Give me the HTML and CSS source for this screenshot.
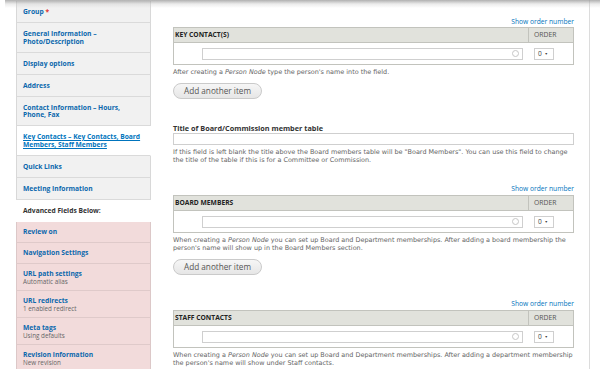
FILE: index.html
```html
<!DOCTYPE html>
<html>
<head>
<meta charset="utf-8">
<link rel="stylesheet" href="styles.css">
</head>
<body>
<div class="topshadow"></div>
<div class="layout">
  <div class="tabs">
    <div class="tab"><a>Group</a> <span class="req">*</span></div>
    <div class="tab two"><a>General Information –<br>Photo/Description</a></div>
    <div class="tab"><a>Display options</a></div>
    <div class="tab"><a>Address</a></div>
    <div class="tab two"><a>Contact Information – Hours,<br>Phone, Fax</a></div>
    <div class="tab two active"><a>Key Contacts – Key Contacts, Board<br>Members, Staff Members</a></div>
    <div class="tab"><a>Quick Links</a></div>
    <div class="tab"><a>Meeting Information</a></div>
    <div class="tab label">Advanced Fields Below:</div>
    <div class="tab pink"><a>Review on</a></div>
    <div class="tab pink"><a>Navigation Settings</a></div>
    <div class="tab pink withsub"><a>URL path settings</a><span class="sub">Automatic alias</span></div>
    <div class="tab pink withsub"><a>URL redirects</a><span class="sub">1 enabled redirect</span></div>
    <div class="tab pink withsub"><a>Meta tags</a><span class="sub">Using defaults</span></div>
    <div class="tab pink withsub last"><a>Revision information</a><span class="sub">New revision</span></div>
  </div>
  <div class="pane">
    <div class="show-order">Show order number</div>
    <div class="ftable">
      <div class="thead"><div class="th-main">KEY CONTACT(S)</div><div class="th-order">ORDER</div></div>
      <div class="trow">
        <div class="td-main"><div class="input ac"><span class="throbber"></span></div></div>
        <div class="td-order"><div class="select">0 <span class="arr">▼</span></div></div>
      </div>
    </div>
    <div class="desc"><span class="ln">After creating a <em>Person Node</em> type the person's name into the field.</span></div>
    <div class="btn">Add another item</div>

    <div class="label-title">Title of Board/Commission member table</div>
    <div class="input full"></div>
    <div class="desc"><span class="ln">If this field is left blank the title above the Board members table will be "Board Members". You can use this field to change</span><span class="ln">the title of the table if this is for a Committee or Commission.</span></div>

    <div class="show-order s2">Show order number</div>
    <div class="ftable">
      <div class="thead"><div class="th-main">BOARD MEMBERS</div><div class="th-order">ORDER</div></div>
      <div class="trow">
        <div class="td-main"><div class="input ac"><span class="throbber"></span></div></div>
        <div class="td-order"><div class="select">0 <span class="arr">▼</span></div></div>
      </div>
    </div>
    <div class="desc"><span class="ln">When creating a <em>Person Node</em> you can set up Board and Department memberships. After adding a board membership the</span><span class="ln">person's name will show up in the Board Members section.</span></div>
    <div class="btn">Add another item</div>

    <div class="show-order s3">Show order number</div>
    <div class="ftable">
      <div class="thead"><div class="th-main">STAFF CONTACTS</div><div class="th-order">ORDER</div></div>
      <div class="trow">
        <div class="td-main"><div class="input ac"><span class="throbber"></span></div></div>
        <div class="td-order"><div class="select">0 <span class="arr">▼</span></div></div>
      </div>
    </div>
    <div class="desc"><span class="ln">When creating a <em>Person Node</em> you can set up Board and Department memberships. After adding a department membership</span><span class="ln">the person's name will show under Staff contacts.</span></div>
  </div>
</div>
</body>
</html>
```
FILE: styles.css
```css
html, body {
  margin: 0;
  padding: 0;
  background: #fff;
}
body {
  width: 606px;
  height: 382px;
  overflow: hidden;
  position: relative;
  font-family: "Open Sans", "Liberation Sans", sans-serif;
  color: #333;
}
.topshadow {
  position: absolute;
  left: 5px;
  right: 6px;
  top: 0;
  height: 8px;
  background: linear-gradient(to bottom, rgba(150,150,150,0.75), rgba(200,200,200,0.35) 50%, rgba(255,255,255,0));
  z-index: 5;
}
.layout {
  display: flex;
  align-items: flex-start;
  padding-left: 16px;
}
.tabs {
  width: 135px;
  flex: none;
  margin-top: 1px;
}
.tab {
  padding: 7px 6px 6.5px 6px;
  line-height: 7.5px;
  font-size: 6.7px;
  font-weight: bold;
  background: #f1f1f1;
  border-left: 1px solid #d8d8d8;
  border-right: 1px solid #d8d8d8;
  border-bottom: 1px solid #dadada;
  white-space: nowrap;
}
.tab.two {
  padding: 7px 6px 6.5px 6px;
}
.tab a {
  color: #0b68ad;
  text-decoration: none;
}
.tab .req {
  color: #e0312f;
}
.tab.active {
  background: #fff;
  border-right-color: #fff;
}
.tab.active a {
  color: #0074bd;
  text-decoration: underline;
}
.tab.label {
  background: #fff;
  border: none;
  color: #333;
  padding: 7px 7px 7.5px 7px;
}
.tab.pink {
  background: #f2dbdb;
  border-left-color: #dcc8c8;
  border-right-color: #dcc8c8;
  border-bottom-color: #dfcaca;
  padding: 6.5px 6px 6px 6px;
}
.tab.pink.withsub {
  padding: 6px 6px 3.5px 6px;
}
.tab .sub {
  display: block;
  font-weight: normal;
  font-size: 6.3px;
  color: #666;
  line-height: 8px;
  margin-top: 1px;
}
.tab.pink.last {
  border-bottom: none;
  padding-bottom: 2px;
}
.pane {
  box-sizing: border-box;
  width: 439px;
  height: 369px;
  flex: none;
  border-right: 1px solid #dcdcdc;
  padding: 17px 15px 0 22px;
}
.show-order {
  text-align: right;
  font-size: 6.7px;
  line-height: 9px;
  color: #0074bd;
  margin-bottom: 1px;
}
.show-order.s2 { margin-top: 20px; margin-bottom: 2px; }
.show-order.s3 { margin-top: 24px; margin-bottom: 2px; }
.ftable {
  border: 1px solid #c2c3bd;
}
.thead {
  display: flex;
  height: 14px;
  background: #e1e2dc;
  border-bottom: 1px solid #c2c3bd;
}
.th-main {
  width: 354px;
  padding-left: 1px;
  font-size: 6.7px;
  font-weight: bold;
  color: #222;
  line-height: 14px;
  box-sizing: border-box;
}
.th-order {
  flex: 1;
  border-left: 1px solid #c2c3bd;
  padding-left: 5px;
  font-size: 6.8px;
  line-height: 14px;
  color: #555;
}
.trow {
  display: flex;
  height: 21px;
  align-items: center;
}
.td-main {
  width: 354px;
  padding-left: 28px;
  box-sizing: border-box;
}
.td-order {
  flex: 1;
  padding-left: 6px;
}
.input {
  height: 12px;
  box-sizing: border-box;
  border: 1px solid #cfcfcf;
  background: #fff;
}
.input.ac {
  width: 321px;
  display: flex;
  align-items: center;
  justify-content: flex-end;
  padding-right: 3px;
}
.throbber {
  width: 5px;
  height: 5px;
  border: 1px solid #c6c6c6;
  border-radius: 50%;
}
.input.full {
  width: 401px;
}
.select {
  width: 20px;
  height: 12px;
  box-sizing: border-box;
  border: 1px solid #cfcfcf;
  font-size: 6.6px;
  line-height: 10px;
  padding-left: 3px;
  color: #444;
}
.select .arr {
  font-size: 3.5px;
  vertical-align: 1px;
  margin-left: 1px;
}
.desc {
  margin-top: 3px;
  font-family: "DejaVu Sans", "Open Sans", sans-serif;
  font-size: 6.45px;
  line-height: 8px;
  color: #666;
}
.desc .ln {
  display: block;
  white-space: nowrap;
}
.btn {
  margin-top: 7px;
  width: 89px;
  height: 16px;
  box-sizing: border-box;
  border: 1px solid #cacaca;
  border-radius: 8px;
  background: linear-gradient(to bottom, #f6f6f6, #e6e6e6);
  font-size: 8.2px;
  line-height: 14px;
  text-align: center;
  color: #555;
}
.label-title {
  margin-top: 25px;
  font-size: 7.3px;
  font-weight: bold;
  line-height: 8px;
  color: #333;
  margin-bottom: 1px;
}
```
